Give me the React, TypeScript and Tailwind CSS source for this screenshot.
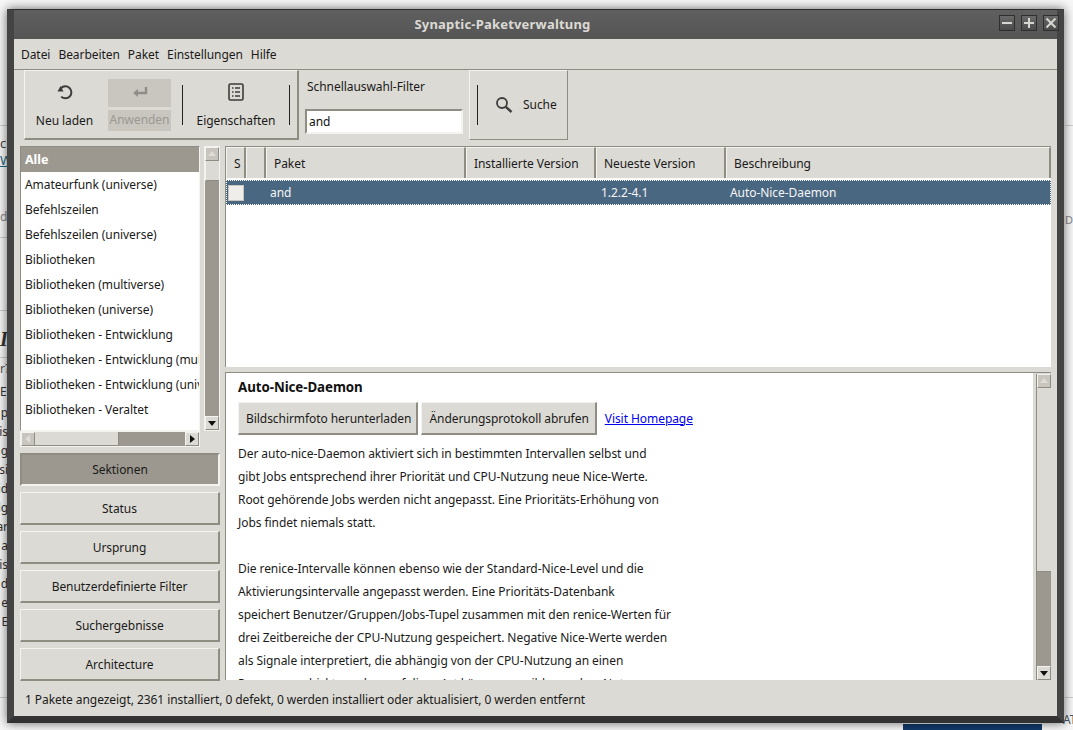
const lists = [
  "Amateurfunk (universe)",
  "Befehlszeilen",
  "Befehlszeilen (universe)",
  "Bibliotheken",
  "Bibliotheken (multiverse)",
  "Bibliotheken (universe)",
  "Bibliotheken - Entwicklung",
  "Bibliotheken - Entwicklung (multiverse)",
  "Bibliotheken - Entwicklung (universe)",
  "Bibliotheken - Veraltet",
];

const filters = ["Status", "Ursprung", "Benutzerdefinierte Filter", "Suchergebnisse", "Architecture"];

const paragraph1 = [
  "Der auto-nice-Daemon aktiviert sich in bestimmten Intervallen selbst und",
  "gibt Jobs entsprechend ihrer Priorität und CPU-Nutzung neue Nice-Werte.",
  "Root gehörende Jobs werden nicht angepasst. Eine Prioritäts-Erhöhung von",
  "Jobs findet niemals statt.",
];

const paragraph2 = [
  "Die renice-Intervalle können ebenso wie der Standard-Nice-Level und die",
  "Aktivierungsintervalle angepasst werden. Eine Prioritäts-Datenbank",
  "speichert Benutzer/Gruppen/Jobs-Tupel zusammen mit den renice-Werten für",
  "drei Zeitbereiche der CPU-Nutzung gespeichert. Negative Nice-Werte werden",
  "als Signale interpretiert, die abhängig von der CPU-Nutzung an einen",
  "Prozess geschickt werden, auf diese Art können sensible werden. Nutzer",
];

const raised = "border border-t-[#f4f3ef] border-l-[#f4f3ef] border-r-[#8f8c82] border-b-[#8f8c82] border-r-2 border-b-2";

const Arrow = ({ dir, muted }: { dir: "up" | "down" | "left" | "right"; muted?: boolean }) => {
  const points = {
    up: "1,7 9,7 5,2",
    down: "1,3 9,3 5,8",
    left: "7,1 7,9 2,5",
    right: "3,1 3,9 8,5",
  }[dir];
  return (
    <svg width="10" height="10" viewBox="0 0 10 10">
      <polygon points={points} fill={muted ? "#dedcd6" : "#111"} />
    </svg>
  );
};

const ScrollBtn = ({ dir, muted }: { dir: "up" | "down" | "left" | "right"; muted?: boolean }) => (
  <div className={`w-[14px] h-[14px] shrink-0 border-t border-l border-t-[#f4f3ef] border-l-[#f4f3ef] border-b border-r border-b-[#8f8c82] border-r-[#8f8c82] flex items-center justify-center ${muted ? "bg-[#c8c5bf]" : "bg-[#dcdad5]"}`}>
    <Arrow dir={dir} muted={muted} />
  </div>
);

const WinBtn = ({ children }: { children: React.ReactNode }) => (
  <div className="w-[16px] h-[16px] border border-[#2f2f2f] bg-gradient-to-b from-[#6a6a6a] to-[#4a4a4a] flex items-center justify-center">
    <svg width="12" height="12" viewBox="0 0 12 12" stroke="#d8d6d0" strokeWidth="2">
      {children}
    </svg>
  </div>
);

const Separator = () => <div className="w-px h-[40px] bg-[#222] shrink-0" />;

const Header = ({ label, className }: { label: string; className: string }) => (
  <div className={`h-[31px] flex items-center px-[7px] pt-[1px] bg-[#dcdad5] border-t border-t-[#f4f3ef] border-l border-l-[#f4f3ef] border-r-2 border-r-[#8f8c82] ${className}`}>
    {label}
  </div>
);

export default function App() {
  return (
    <div className="relative w-[1073px] h-[730px] overflow-hidden bg-[#f7f7f7] text-[12px] tracking-[-0.06px] text-[#1a1a1a] [font-family:'Noto_Sans',sans-serif]">
      {/* desktop behind the window */}
      <div className="absolute left-0 top-[125px] w-[8px] h-px bg-[#cfcfcf]" />
      <div className="absolute left-0 top-[237px] w-[8px] h-px bg-[#cfcfcf]" />
      <div className="absolute left-0 top-[310px] w-[8px] h-px bg-[#cfcfcf]" />
      <div className="absolute left-0 top-[357px] w-[8px] h-px bg-[#cfcfcf]" />
      <div className="absolute left-0 top-[697px] w-[8px] h-px bg-[#cfcfcf]" />
      <div className="absolute left-[1065px] top-[125px] w-[8px] h-px bg-[#cfcfcf]" />
      <div className="absolute left-[1065px] top-[697px] w-[8px] h-px bg-[#cfcfcf]" />
      <div className="absolute left-0 top-[134px] text-[#444] leading-[19px] text-[13px]">cl</div>
      <div className="absolute left-0 top-[151px] text-[#1a6a8a] text-[13px] underline">W</div>
      <div className="absolute left-0 top-[208px] text-[#888] text-[12px]">d</div>
      <div className="absolute left-0 top-[324px] text-[#333] text-[20px] italic font-bold [font-family:'Liberation_Serif',serif]">I</div>
      <div className="absolute left-0 top-[360px] text-[#555] text-[12px]">r?</div>
      <div className="absolute left-0 top-[383px] text-[#333] text-[12px]">E</div>
      <div className="absolute left-0 top-[403px] w-[8px] text-[#333] text-[12px] leading-[19px] flex flex-col items-end">
        <span>p</span>
        <span>is</span>
        <span>ng</span>
        <span>si</span>
        <span>id</span>
        <span>lg</span>
        <span>ar</span>
        <span>a</span>
        <span>is</span>
        <span>d</span>
        <span>e</span>
        <span>E</span>
      </div>
      <div className="absolute left-[903px] top-[724px] w-[139px] h-[6px] bg-[#123a6b]" />
      <div className="absolute left-[1063px] top-[711px] text-[#456] text-[12px]">AT</div>
      <div className="absolute left-[1065px] top-[212px] text-[#888] text-[11px]">Da</div>

      {/* synaptic window */}
      <div className="absolute left-[7px] top-[9px] w-[1057px] h-[714px] flex flex-col bg-[#555] border-t border-t-[#2c2c2c] border-b-[7px] border-b-[#333] border-r-[7px] border-r-[#444] border-l-[7px] border-l-[#444] shadow-[0_0_10px_rgba(0,0,0,0.6)]">
        <div className="h-[29px] shrink-0 relative flex items-center justify-center pr-[66px] bg-gradient-to-b from-[#5f5f5f] to-[#555]">
          <span className="text-[#dcdad5] font-bold text-[13px] tracking-[0.2px]">Synaptic-Paketverwaltung</span>
          <div className="absolute right-[-2px] top-[5px] flex gap-[6px]">
            <WinBtn>
              <line x1="1" y1="6" x2="11" y2="6" />
            </WinBtn>
            <WinBtn>
              <line x1="1" y1="6" x2="11" y2="6" />
              <line x1="6" y1="1" x2="6" y2="11" />
            </WinBtn>
            <WinBtn>
              <line x1="1.5" y1="1.5" x2="10.5" y2="10.5" />
              <line x1="10.5" y1="1.5" x2="1.5" y2="10.5" />
            </WinBtn>
          </div>
        </div>

        <div className="flex-1 min-h-0 flex flex-col bg-[#dcdad5]">
          {/* menu */}
          <div className="h-[31px] shrink-0 flex items-center gap-[8px] pl-[7px] pt-[1px] border-b border-b-[#8f8c82]">
            <span>Datei</span>
            <span>Bearbeiten</span>
            <span>Paket</span>
            <span>Einstellungen</span>
            <span>Hilfe</span>
          </div>

          {/* toolbar */}
          <div className="h-[70px] shrink-0 flex pl-[10px]">
            <div className="w-[275px] h-[70px] flex items-center border border-[#f4f3ef] border-b-2 border-r-2 border-b-[#8f8c82] border-r-[#8f8c82]">
              <div className="w-[83px] pr-[4px] flex flex-col items-center">
                <div className="h-[28px] flex items-center justify-center">
                  <svg width="18" height="18" viewBox="0 0 18 18" fill="none">
                    <path d="M5 5.2A6 6 0 1 1 5.2 13.6" stroke="#3c3c3c" strokeWidth="2" />
                    <polygon points="1.5,8.5 7.5,8.5 4.5,3" fill="#3c3c3c" />
                  </svg>
                </div>
                <span className="mt-[4px] leading-[21px]">Neu laden</span>
              </div>
              <div className="w-[63px] flex flex-col items-center gap-[3px]">
                <div className="w-[63px] h-[28px] bg-[#c9c6c0] flex items-center justify-center">
                  <svg width="16" height="14" viewBox="0 0 16 14" fill="none">
                    <path d="M14 1v6H5" stroke="#8f8d87" strokeWidth="2.4" />
                    <polygon points="1,7 6,3 6,11" fill="#8f8d87" />
                  </svg>
                </div>
                <div className="w-[63px] h-[21px] bg-[#c9c6c0] text-[#9a9892] flex items-center justify-center">Anwenden</div>
              </div>
              <div className="ml-[11px]">
                <Separator />
              </div>
              <div className="w-[106px] flex flex-col items-center">
                <div className="h-[28px] flex items-center justify-center">
                  <svg width="18" height="18" viewBox="0 0 18 18" fill="none">
                    <rect x="2" y="1" width="14" height="16" rx="1.5" stroke="#3c3c3c" strokeWidth="1.6" />
                    <path d="M5 5h1.5M8 5h5M5 9h1.5M8 9h5M5 13h1.5M8 13h5" stroke="#3c3c3c" strokeWidth="1.6" />
                  </svg>
                </div>
                <span className="mt-[4px] leading-[21px]">Eigenschaften</span>
              </div>
              <Separator />
            </div>
            <div className="w-[170px] h-[70px] flex flex-col pl-[6px] pt-[6px]">
              <span className="leading-[21px] ml-[2px]">Schnellauswahl-Filter</span>
              <div className="mt-[12px] w-[158px] h-[25px] bg-white border-2 border-t-[#8f8c82] border-l-[#8f8c82] border-r-[#f4f3ef] border-b-[#f4f3ef] flex items-center pl-[2px] text-[#111]">
                and
              </div>
            </div>
            <div className="w-[99px] h-[70px] flex items-center border border-[#f4f3ef] border-b-[#8f8c82] border-r-[#8f8c82] pl-[7px]">
              <Separator />
              <svg className="ml-[17px]" width="18" height="18" viewBox="0 0 18 18" fill="none">
                <circle cx="7" cy="7" r="5" stroke="#3c3c3c" strokeWidth="1.8" />
                <line x1="10.8" y1="10.8" x2="16.5" y2="16" stroke="#3c3c3c" strokeWidth="2.4" />
              </svg>
              <span className="ml-[10px]">Suche</span>
            </div>
          </div>

          {/* main area */}
          <div className="flex-1 min-h-0 flex pt-[6px] pl-[6px] pr-[6px] gap-[5px]">
            <div className="w-[200px] shrink-0 flex flex-col overflow-hidden h-[535px]">
              <div className="flex gap-[4px] h-[285px] shrink-0">
                <div className="w-[180px] bg-white border border-[#8f8c82] border-r-[#f4f3ef] border-b-[#f4f3ef] overflow-hidden">
                  <div className="h-[25px] flex items-center pl-[4px] pt-[1px] bg-[#9c988f] text-white font-bold text-[12.5px]">Alle</div>
                  {lists.map((item) => (
                    <div key={item} className="h-[25px] flex items-center pl-[4px] whitespace-nowrap">
                      {item}
                    </div>
                  ))}
                </div>
                <div className="w-[16px] bg-[#9c988f] flex flex-col border border-[#f4f3ef]">
                  <ScrollBtn dir="up" muted />
                  <div className="h-[20px] w-[14px] bg-[#dcdad5] border-b border-b-[#8f8c82] border-l border-l-[#f4f3ef]" />
                  <div className="flex-1" />
                  <ScrollBtn dir="down" />
                </div>
              </div>
              <div className="w-[180px] h-[16px] shrink-0 bg-[#9c988f] flex border border-[#f4f3ef]">
                <ScrollBtn dir="left" muted />
                <div className="w-[84px] h-[14px] bg-[#dcdad5] border-r border-r-[#8f8c82] border-b border-b-[#8f8c82]" />
                <div className="flex-1" />
                <ScrollBtn dir="right" />
              </div>
              <div className="mt-[6px] h-[33px] shrink-0 flex items-center justify-center bg-[#9c988f] border-2 border-t-[#8f8c82] border-l-[#8f8c82] border-r-[#f4f3ef] border-b-[#f4f3ef]">
                Sektionen
              </div>
              {filters.map((item) => (
                <div key={item} className={`mt-[6px] h-[33px] shrink-0 flex items-center justify-center pt-[1px] ${raised}`}>
                  {item}
                </div>
              ))}
            </div>

            <div className="w-[826px] flex flex-col">
              <div className="h-[221px] shrink-0 bg-white border-t border-t-[#8f8c82] border-l border-l-[#8f8c82]">
                <div className="flex">
                  <Header label="S" className="w-[20px]" />
                  <Header label="" className="w-[20px]" />
                  <Header label="Paket" className="w-[200px]" />
                  <Header label="Installierte Version" className="w-[130px]" />
                  <Header label="Neueste Version" className="w-[130px]" />
                  <Header label="Beschreibung" className="flex-1" />
                </div>
                <div className="h-[25px] mt-[2px] flex items-center bg-[#4a6781] text-[#f5f5f5] border border-dotted border-white">
                  <div className="w-[39px] pl-[1px]">
                    <div className="w-[16px] h-[16px] bg-[#efeeea] border border-[#c9c6c0]" />
                  </div>
                  <div className="w-[335px] pl-[4px]">and</div>
                  <div className="w-[129px]">1.2.2-4.1</div>
                  <div>Auto-Nice-Daemon</div>
                </div>
              </div>
              <div className="mt-[5px] h-[308px] flex bg-[#dcdad5] border-l border-l-[#8f8c82] border-t border-t-[#8f8c82] overflow-hidden">
                <div className="w-[807px] bg-white pl-[12px] overflow-hidden">
                  <div className="mt-[4px] font-bold text-[13.3px] leading-[20px] text-[#111]">Auto-Nice-Daemon</div>
                  <div className="mt-[5px] flex items-center">
                    <div className={`h-[33px] flex items-center pl-[7px] pr-[5px] pt-[1px] bg-[#dcdad5] ${raised}`}>Bildschirmfoto herunterladen</div>
                    <div className={`ml-[3px] h-[33px] flex items-center pl-[7px] pr-[6px] pt-[1px] bg-[#dcdad5] ${raised}`}>Änderungsprotokoll abrufen</div>
                    <a href="#" className="ml-[8px] text-[#0000ee] underline">
                      Visit Homepage
                    </a>
                  </div>
                  <div className="mt-[7px] leading-[23px]">
                    {paragraph1.map((line) => (
                      <div key={line}>{line}</div>
                    ))}
                    <div className="h-[23px]" />
                    {paragraph2.map((line) => (
                      <div key={line}>{line}</div>
                    ))}
                  </div>
                </div>
                <div className="ml-[3px] mt-[1px] w-[15px] bg-[#9c988f] flex flex-col h-[306px] border-l border-l-[#8f8c82]">
                  <ScrollBtn dir="up" muted />
                  <div className="h-[184px] w-[14px] bg-[#dcdad5] border-b border-b-[#8f8c82]" />
                  <div className="flex-1" />
                  <ScrollBtn dir="down" />
                </div>
              </div>
            </div>
          </div>

          {/* status bar */}
          <div className="h-[36px] shrink-0 flex items-center pl-[11px] pt-[3px]">
            1 Pakete angezeigt, 2361 installiert, 0 defekt, 0 werden installiert oder aktualisiert, 0 werden entfernt
          </div>
        </div>
      </div>
    </div>
  );
}
